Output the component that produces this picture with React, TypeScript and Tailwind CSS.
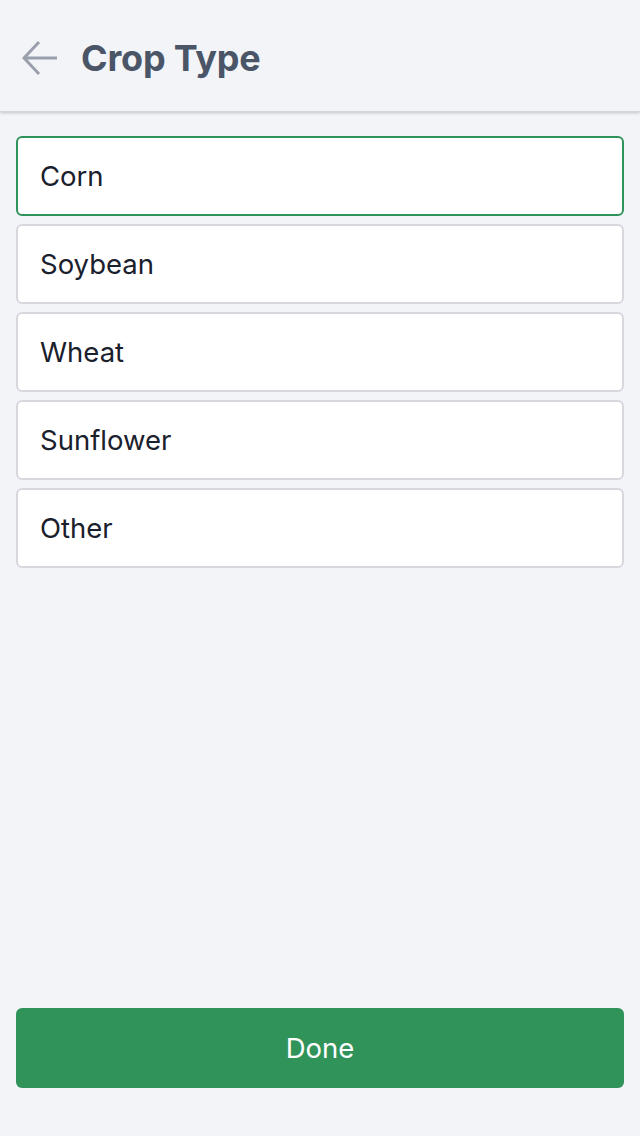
import React, { useState } from "react";

const items = ["Corn", "Soybean", "Wheat", "Sunflower", "Other"];

export default function App() {
  const [selected, setSelected] = useState("Corn");
  return (
    <div
      className="flex flex-col h-[1136px] bg-[#f2f4f8] text-[#1a202c]"
      style={{ fontFamily: "Inter, 'Noto Sans', sans-serif" }}
    >
      <header className="flex items-center h-[112px] pt-[5px] px-[22px] gap-[23px] bg-[#f2f4f8] shadow-[0_1px_3px_rgba(0,0,0,0.2)] border-b border-[#d4d6db]">
        <svg width="36" height="36" viewBox="0 0 36 36" fill="none" className="shrink-0">
          <path
            d="M35 18H2M17 2L2 18L17 34"
            stroke="#9aa0ab"
            strokeWidth="3"
            strokeLinecap="butt"
            strokeLinejoin="miter"
          />
        </svg>
        <h1 className="text-[36px] font-bold text-[#4a5568] leading-none tracking-[-0.2px]">Crop Type</h1>
      </header>
      <main className="flex flex-col gap-2 px-4 pt-6 flex-1">
        {items.map((it) => (
          <button
            key={it}
            onClick={() => setSelected(it)}
            className={`h-20 w-full flex items-center px-[22px] pt-[2px] bg-white rounded-md border-2 text-left text-[27.5px] ${
              selected === it ? "border-[#30935a]" : "border-[#d6d8dd]"
            }`}
          >
            {it}
          </button>
        ))}
      </main>
      <div className="px-4 pb-12">
        <button className="h-20 w-full rounded-md bg-[#30935a] text-white text-[27.5px] pt-[2px]">Done</button>
      </div>
    </div>
  );
}
